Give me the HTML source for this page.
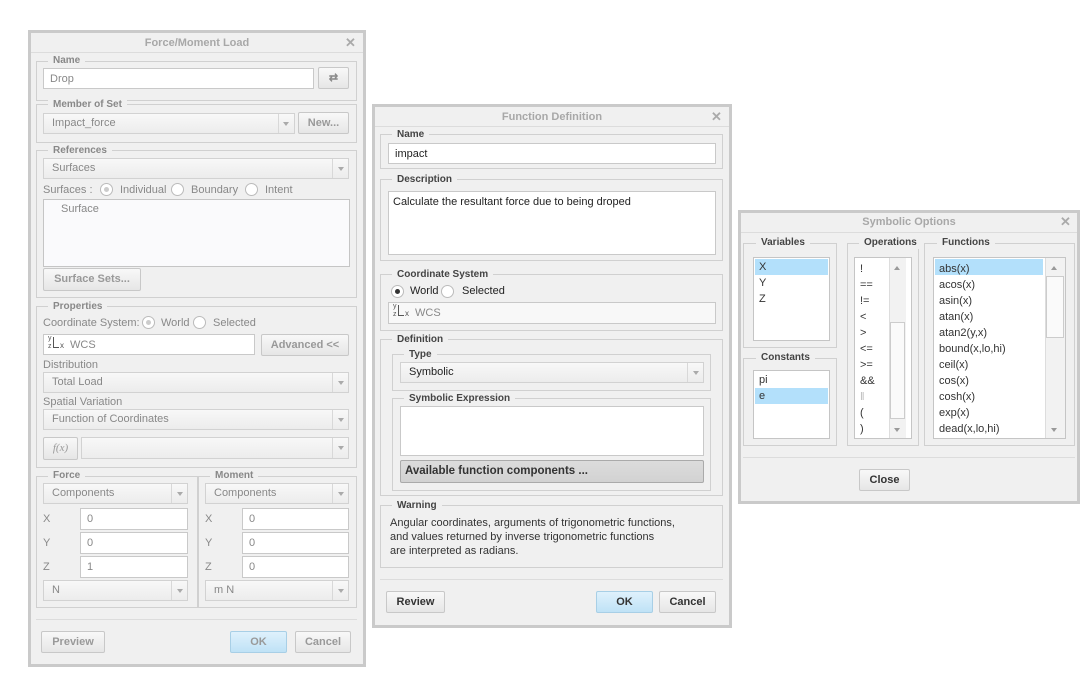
<!DOCTYPE html>
<html><head><meta charset="utf-8"><style>
*{box-sizing:border-box;margin:0;padding:0}
body{width:1089px;height:677px;background:#fff;position:relative;overflow:hidden;font-family:"Liberation Sans",Arial,sans-serif;font-size:11px;color:#222}
div{position:absolute}
.dlg{border:3px solid #cacaca;background:#f0f0f0}
.title{font-weight:bold;color:#a8a8a8;font-size:11px;text-align:center}
.x{color:#aaa;font-weight:bold;font-size:13px}
.sep{height:1px;background:#dcdcdc}
.g{border:1px solid #d0d0d0}
.lg{background:#f0f0f0;padding:0 5px;line-height:12px;font-size:10px;color:#444;font-weight:bold;white-space:nowrap}
.d1 .lg{color:#888}
.in{background:#fff;border:1px solid #c9c9c9;padding:3px 6px;line-height:14px}
.dd{background:linear-gradient(#f8f8f8,#ececec);border:1px solid #d2d2d2;padding:3px 8px;line-height:13px;color:#888}
.dd::after{content:"";position:absolute;right:0;top:0;bottom:0;width:15px;border-left:1px solid #d8d8d8}
.ar{width:0;height:0;border-left:3px solid transparent;border-right:3px solid transparent;border-top:4px solid #aaa}
.btn{background:linear-gradient(#f8f8f8,#e6e6e6);border:1px solid #c8c8c8;border-radius:2px;text-align:center;font-weight:bold;line-height:20px;color:#999}
.blue{background:linear-gradient(#dff1fc,#bfe2f6);border-color:#a8cfe6}
.t{white-space:nowrap;line-height:13px}
.gr{color:#888}
.rad{width:13px;height:13px;border:1px solid #bbb;border-radius:50%;background:#fff}
.lb{background:#fff;border:1px solid #c5c5c5}
.sel{background:#b3e0fb}
</style></head><body>

<!-- Dialog 1 -->
<div class="dlg" style="left:28px;top:30px;width:338px;height:637px"></div>
<div class="title t" style="left:31px;top:37px;width:332px">Force/Moment Load</div>
<div class="x" style="left:345px;top:35px">✕</div>
<div class="sep" style="left:31px;top:52px;width:332px"></div>
<div class="d1">
<div class="g" style="left:36px;top:61px;width:321px;height:40px"></div>
<div class="lg" style="left:48px;top:55px">Name</div>
<div class="in gr" style="left:43px;top:68px;width:271px;height:21px">Drop</div>
<div class="btn" style="left:318px;top:67px;width:31px;height:22px;color:#888">⇄</div>

<div class="g" style="left:36px;top:104px;width:321px;height:39px"></div>
<div class="lg" style="left:48px;top:99px">Member of Set</div>
<div class="dd" style="left:43px;top:113px;width:252px;height:21px">Impact_force</div>
<div class="ar" style="left:283px;top:122px"></div>
<div class="btn" style="left:298px;top:112px;width:51px;height:22px">New...</div>

<div class="g" style="left:36px;top:150px;width:321px;height:148px"></div>
<div class="lg" style="left:48px;top:145px">References</div>
<div class="dd" style="left:43px;top:158px;width:306px;height:21px">Surfaces</div>
<div class="ar" style="left:338px;top:167px"></div>
<div class="t gr" style="left:43px;top:184px">Surfaces :</div>
<div class="rad" style="left:100px;top:183px"></div><div style="left:104px;top:187px;width:5px;height:5px;border-radius:50%;background:#ccc"></div>
<div class="t gr" style="left:120px;top:184px">Individual</div>
<div class="rad" style="left:171px;top:183px"></div>
<div class="t gr" style="left:191px;top:184px">Boundary</div>
<div class="rad" style="left:245px;top:183px"></div>
<div class="t gr" style="left:265px;top:184px">Intent</div>
<div class="lb" style="left:43px;top:199px;width:307px;height:68px;background:#fafafc"></div>
<div class="t gr" style="left:61px;top:203px">Surface</div>
<div class="btn" style="left:43px;top:268px;width:98px;height:23px">Surface Sets...</div>

<div class="g" style="left:36px;top:306px;width:321px;height:162px"></div>
<div class="lg" style="left:48px;top:301px">Properties</div>
<div class="t gr" style="left:43px;top:317px">Coordinate System:</div>
<div class="rad" style="left:142px;top:316px"></div><div style="left:146px;top:320px;width:5px;height:5px;border-radius:50%;background:#ccc"></div>
<div class="t gr" style="left:161px;top:317px">World</div>
<div class="rad" style="left:193px;top:316px"></div>
<div class="t gr" style="left:213px;top:317px">Selected</div>
<div class="in gr" style="left:43px;top:334px;width:212px;height:21px;padding-left:26px">WCS</div>
<div style="left:48px;top:335px;font-size:7px;color:#555;line-height:8px">y<br>z</div><div style="left:53px;top:337px;width:1px;height:10px;background:#555"></div><div style="left:53px;top:347px;width:6px;height:1px;background:#555"></div><div style="left:60px;top:341px;font-size:8px;color:#555">x</div>
<div class="btn" style="left:261px;top:334px;width:88px;height:22px">Advanced &lt;&lt;</div>
<div class="t gr" style="left:43px;top:359px">Distribution</div>
<div class="dd" style="left:43px;top:372px;width:306px;height:21px">Total Load</div>
<div class="ar" style="left:338px;top:381px"></div>
<div class="t gr" style="left:43px;top:396px">Spatial Variation</div>
<div class="dd" style="left:43px;top:409px;width:306px;height:21px">Function of Coordinates</div>
<div class="ar" style="left:338px;top:418px"></div>
<div class="btn" style="left:43px;top:437px;width:35px;height:23px;font-weight:normal;font-style:italic;font-family:'Liberation Serif',serif">f(x)</div>
<div class="dd" style="left:81px;top:437px;width:268px;height:22px"></div>
<div class="ar" style="left:338px;top:446px"></div>

<div class="g" style="left:36px;top:476px;width:162px;height:132px"></div>
<div class="g" style="left:198px;top:476px;width:159px;height:132px"></div>
<div class="lg" style="left:48px;top:470px">Force</div>
<div class="lg" style="left:210px;top:470px">Moment</div>
<div class="dd" style="left:43px;top:483px;width:145px;height:21px">Components</div><div class="ar" style="left:177px;top:492px"></div>
<div class="dd" style="left:205px;top:483px;width:144px;height:21px">Components</div><div class="ar" style="left:338px;top:492px"></div>
<div class="t gr" style="left:43px;top:513px">X</div><div class="in gr" style="left:80px;top:508px;width:108px;height:22px">0</div>
<div class="t gr" style="left:43px;top:537px">Y</div><div class="in gr" style="left:80px;top:532px;width:108px;height:22px">0</div>
<div class="t gr" style="left:43px;top:561px">Z</div><div class="in gr" style="left:80px;top:556px;width:108px;height:22px">1</div>
<div class="t gr" style="left:205px;top:513px">X</div><div class="in gr" style="left:242px;top:508px;width:107px;height:22px">0</div>
<div class="t gr" style="left:205px;top:537px">Y</div><div class="in gr" style="left:242px;top:532px;width:107px;height:22px">0</div>
<div class="t gr" style="left:205px;top:561px">Z</div><div class="in gr" style="left:242px;top:556px;width:107px;height:22px">0</div>
<div class="dd" style="left:43px;top:580px;width:145px;height:21px">N</div><div class="ar" style="left:177px;top:589px"></div>
<div class="dd" style="left:205px;top:580px;width:144px;height:21px">m N</div><div class="ar" style="left:338px;top:589px"></div>
<div class="sep" style="left:36px;top:619px;width:321px"></div>
<div class="btn" style="left:41px;top:631px;width:64px;height:22px">Preview</div>
<div class="btn blue" style="left:230px;top:631px;width:57px;height:22px">OK</div>
<div class="btn" style="left:295px;top:631px;width:56px;height:22px">Cancel</div>
</div>

<!-- Dialog 2 -->
<div class="dlg" style="left:372px;top:104px;width:360px;height:524px"></div>
<div class="title t" style="left:375px;top:111px;width:354px">Function Definition</div>
<div class="x" style="left:711px;top:109px">✕</div>
<div class="sep" style="left:375px;top:126px;width:354px"></div>

<div class="g" style="left:380px;top:134px;width:343px;height:35px"></div>
<div class="lg" style="left:392px;top:129px">Name</div>
<div class="in" style="left:388px;top:143px;width:328px;height:21px">impact</div>

<div class="g" style="left:380px;top:179px;width:343px;height:82px"></div>
<div class="lg" style="left:392px;top:174px">Description</div>
<div class="in" style="left:388px;top:191px;width:328px;height:64px;padding-left:4px">Calculate the resultant force due to being droped</div>

<div class="g" style="left:380px;top:274px;width:343px;height:57px"></div>
<div class="lg" style="left:392px;top:269px">Coordinate System</div>
<div class="rad" style="left:391px;top:285px"></div><div style="left:395px;top:289px;width:5px;height:5px;border-radius:50%;background:#333"></div>
<div class="t" style="left:410px;top:285px">World</div>
<div class="rad" style="left:441px;top:285px"></div>
<div class="t" style="left:462px;top:285px">Selected</div>
<div class="in gr" style="left:388px;top:302px;width:328px;height:22px;padding-left:26px;background:#f8f8f8">WCS</div>
<div style="left:393px;top:303px;font-size:7px;color:#555;line-height:8px">y<br>z</div><div style="left:398px;top:305px;width:1px;height:10px;background:#555"></div><div style="left:398px;top:315px;width:6px;height:1px;background:#555"></div><div style="left:405px;top:309px;font-size:8px;color:#555">x</div>

<div class="g" style="left:380px;top:339px;width:343px;height:157px"></div>
<div class="lg" style="left:392px;top:334px">Definition</div>
<div class="g" style="left:392px;top:354px;width:319px;height:37px"></div>
<div class="lg" style="left:404px;top:349px">Type</div>
<div class="dd" style="left:400px;top:362px;width:304px;height:21px;color:#222">Symbolic</div><div class="ar" style="left:693px;top:371px"></div>
<div class="g" style="left:392px;top:398px;width:319px;height:93px"></div>
<div class="lg" style="left:404px;top:393px">Symbolic Expression</div>
<div class="in" style="left:400px;top:406px;width:304px;height:50px"></div>
<div class="btn" style="left:400px;top:460px;width:304px;height:23px;background:linear-gradient(#dcdcdc,#d2d2d2);border-color:#aaa;color:#333;text-align:left;padding-left:4px;font-size:11.5px">Available function components ...</div>

<div class="g" style="left:380px;top:505px;width:343px;height:63px"></div>
<div class="lg" style="left:392px;top:500px">Warning</div>
<div class="t" style="left:390px;top:516px;color:#333;line-height:14px">Angular coordinates, arguments of trigonometric functions,<br>and values returned by inverse trigonometric functions<br>are interpreted as radians.</div>
<div class="sep" style="left:380px;top:579px;width:343px"></div>
<div class="btn" style="left:386px;top:591px;width:59px;height:22px;color:#333">Review</div>
<div class="btn blue" style="left:596px;top:591px;width:57px;height:22px;color:#333">OK</div>
<div class="btn" style="left:659px;top:591px;width:57px;height:22px;color:#333">Cancel</div>

<!-- Dialog 3 -->
<div class="dlg" style="left:738px;top:210px;width:342px;height:294px"></div>
<div class="title t" style="left:741px;top:216px;width:336px">Symbolic Options</div>
<div class="x" style="left:1060px;top:214px">✕</div>
<div class="sep" style="left:741px;top:232px;width:336px"></div>

<div class="g" style="left:743px;top:243px;width:94px;height:105px"></div>
<div class="lg" style="left:756px;top:237px">Variables</div>
<div class="lb" style="left:753px;top:257px;width:77px;height:84px"></div>
<div class="sel" style="left:755px;top:259px;width:73px;height:16px"></div>
<div class="t" style="left:759px;top:261px;color:#333">X</div>
<div class="t" style="left:759px;top:277px;color:#333">Y</div>
<div class="t" style="left:759px;top:293px;color:#333">Z</div>

<div class="g" style="left:743px;top:358px;width:94px;height:88px"></div>
<div class="lg" style="left:756px;top:352px">Constants</div>
<div class="lb" style="left:753px;top:370px;width:77px;height:69px"></div>
<div class="t" style="left:759px;top:374px;color:#333">pi</div>
<div class="sel" style="left:755px;top:388px;width:73px;height:16px"></div>
<div class="t" style="left:759px;top:390px;color:#333">e</div>

<div class="g" style="left:847px;top:243px;width:72px;height:203px"></div>
<div class="lg" style="left:859px;top:237px">Operations</div>
<div class="lb" style="left:854px;top:257px;width:58px;height:182px"></div>
<div style="left:889px;top:258px;width:17px;height:180px;background:#f2f2f2;border-left:1px solid #ddd"></div>
<div style="left:890px;top:322px;width:15px;height:97px;background:#fafafa;border:1px solid #ccc"></div>
<div style="left:894px;top:266px;border-left:3px solid transparent;border-right:3px solid transparent;border-bottom:4px solid #999"></div>
<div style="left:894px;top:428px;border-left:3px solid transparent;border-right:3px solid transparent;border-top:4px solid #999"></div>
<div class="t" style="left:860px;top:261px;color:#333;line-height:16px">!<br>==<br>!=<br>&lt;<br>&gt;<br>&lt;=<br>&gt;=<br>&amp;&amp;<br><span style="color:#bbb">‖</span><br>(<br>)</div>

<div class="g" style="left:924px;top:243px;width:151px;height:203px"></div>
<div class="lg" style="left:937px;top:237px">Functions</div>
<div class="lb" style="left:933px;top:257px;width:133px;height:182px"></div>
<div style="left:1045px;top:258px;width:20px;height:180px;background:#f2f2f2;border-left:1px solid #ddd"></div>
<div style="left:1046px;top:276px;width:18px;height:62px;background:#fafafa;border:1px solid #ccc"></div>
<div style="left:1051px;top:266px;border-left:3px solid transparent;border-right:3px solid transparent;border-bottom:4px solid #999"></div>
<div style="left:1051px;top:428px;border-left:3px solid transparent;border-right:3px solid transparent;border-top:4px solid #999"></div>
<div class="sel" style="left:935px;top:259px;width:108px;height:16px"></div>
<div class="t" style="left:939px;top:261px;color:#333;line-height:16px">abs(x)<br>acos(x)<br>asin(x)<br>atan(x)<br>atan2(y,x)<br>bound(x,lo,hi)<br>ceil(x)<br>cos(x)<br>cosh(x)<br>exp(x)<br>dead(x,lo,hi)</div>

<div class="sep" style="left:743px;top:457px;width:332px"></div>
<div class="btn" style="left:859px;top:469px;width:51px;height:22px;color:#333">Close</div>
</body></html>
